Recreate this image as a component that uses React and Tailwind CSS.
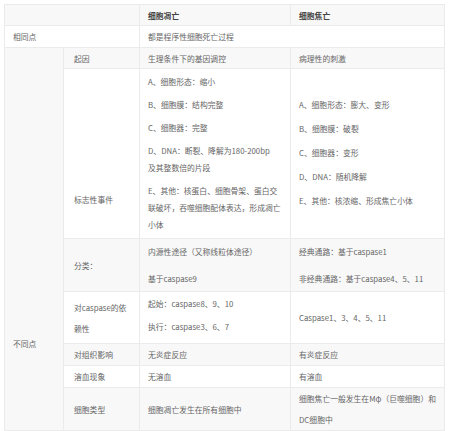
import React from 'react'

const cell = 'border border-[#ebebeb] px-[8px] py-0 align-middle whitespace-nowrap'
const gray = 'bg-[#f8f8f8]'

function Lines({ items, gap = 'gap-[6px]', lh = 'leading-[17px]' }) {
  return (
    <div className={`flex flex-col ${gap} ${lh}`}>
      {items.map((p, i) => (
        <div key={i}>
          {(Array.isArray(p) ? p : [p]).map((l, j) => <div key={j}>{l}</div>)}
        </div>
      ))}
    </div>
  )
}

export default function App() {
  return (
    <div
      className="w-[450px] h-[431px] bg-white pt-[4px] pl-[4px] text-[7.8px] text-[#666]"
      style={{ fontFamily: '"Noto Sans CJK SC", "Noto Sans", sans-serif' }}
    >
      <table className="table-fixed border-collapse w-[440px] leading-[17px]">
        <colgroup>
          <col className="w-[59px]" />
          <col className="w-[76px]" />
          <col className="w-[151px]" />
          <col className="w-[154px]" />
        </colgroup>
        <tbody>
          {/* Header */}
          <tr className={`h-[21px] ${gray}`}>
            <td colSpan={2} className={cell}></td>
            <td className={`${cell} font-semibold text-[#444]`}>细胞凋亡</td>
            <td className={`${cell} font-semibold text-[#444]`}>细胞焦亡</td>
          </tr>

          <tr className="h-[22px]">
            <td colSpan={2} className={cell}>相同点</td>
            <td colSpan={2} className={cell}>都是程序性细胞死亡过程</td>
          </tr>

          <tr className={`h-[21px] ${gray}`}>
            <td rowSpan={8} className={`${cell} align-top pt-[287px]`}>不同点</td>
            <td className={`${cell} pl-[10px]`}>起因</td>
            <td className={cell}>生理条件下的基因调控</td>
            <td className={cell}>病理性的刺激</td>
          </tr>

          {/* 标志性事件 */}
          <tr className="h-[170px]">
            <td className={`${cell} pl-[10px] align-top pt-[122px]`}>标志性事件</td>
            <td className={`${cell} align-top pt-[4px]`}>
              <Lines
                items={[
                  'A、细胞形态：缩小',
                  'B、细胞膜：结构完整',
                  'C、细胞器：完整',
                  ['D、DNA：断裂、降解为180-200bp', '及其整数倍的片段'],
                  ['E、其他：核蛋白、细胞骨架、蛋白交', '联破坏，吞噬细胞配体表达，形成凋亡', '小体'],
                ]}
              />
            </td>
            <td className={`${cell} align-top pt-[27px]`}>
              <Lines
                gap="gap-[7px]"
                items={[
                  'A、细胞形态：膨大、变形',
                  'B、细胞膜：破裂',
                  'C、细胞器：变形',
                  'D、DNA：随机降解',
                  'E、其他：核浓缩、形成焦亡小体',
                ]}
              />
            </td>
          </tr>

          {/* 分类 */}
          <tr className={`h-[53px] ${gray}`}>
            <td className={`${cell} pl-[10px]`}>分类：</td>
            <td className={cell}>
              <Lines gap="gap-[10px]" items={['内源性途径（又称线粒体途径）', '基于caspase9']} />
            </td>
            <td className={cell}>
              <Lines gap="gap-[10px]" items={['经典通路：基于caspase1', '非经典通路：基于caspase4、5、11']} />
            </td>
          </tr>

          {/* 依赖性 */}
          <tr className="h-[52px]">
            <td className={`${cell} pl-[10px]`}>
              <Lines lh="leading-[21px]" gap="gap-0" items={[['对caspase的依', '赖性']]} />
            </td>
            <td className={`${cell} align-top pt-[3px]`}>
              <Lines items={['起始：caspase8、9、10', '执行：caspase3、6、7']} />
            </td>
            <td className={cell}>Caspase1、3、4、5、11</td>
          </tr>

          <tr className={`h-[22px] ${gray}`}>
            <td className={`${cell} pl-[10px]`}>对组织影响</td>
            <td className={cell}>无炎症反应</td>
            <td className={cell}>有炎症反应</td>
          </tr>

          <tr className="h-[22px]">
            <td className={`${cell} pl-[10px]`}>溶血现象</td>
            <td className={cell}>无溶血</td>
            <td className={cell}>有溶血</td>
          </tr>

          <tr className={`h-[41px] ${gray}`}>
            <td className={`${cell} pl-[10px]`}>细胞类型</td>
            <td className={cell}>细胞凋亡发生在所有细胞中</td>
            <td className={cell}>
              <Lines lh="leading-[21px]" gap="gap-0" items={[['细胞焦亡一般发生在Mφ（巨噬细胞）和', 'DC细胞中']]} />
            </td>
          </tr>
        </tbody>
      </table>
    </div>
  )
}
